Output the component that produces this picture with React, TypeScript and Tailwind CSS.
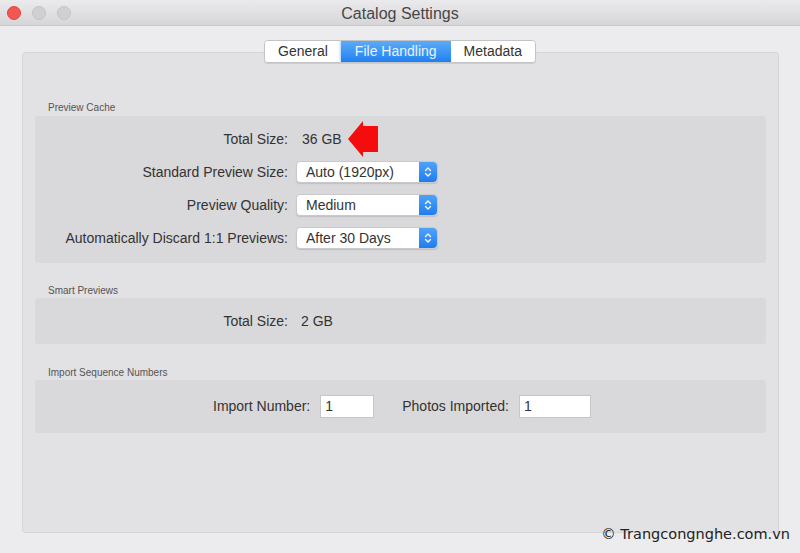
import React from "react";

const font = { fontFamily: '"Liberation Sans", Inter, Arial, sans-serif' };

function Stepper() {
  return (
    <span className="flex h-full w-[18px] items-center justify-center rounded-r-[4px] bg-gradient-to-b from-[#4ea3f8] to-[#1f7cf0]">
      <svg width="8" height="12" viewBox="0 0 8 12" fill="none">
        <path d="M1.5 4.5 L4 2 L6.5 4.5" stroke="white" strokeWidth="1.3" strokeLinecap="round" strokeLinejoin="round" />
        <path d="M1.5 7.5 L4 10 L6.5 7.5" stroke="white" strokeWidth="1.3" strokeLinecap="round" strokeLinejoin="round" />
      </svg>
    </span>
  );
}

function Select({ value }: { value: string }) {
  return (
    <div className="flex h-[22px] w-[142px] items-center justify-between rounded-[4px] border border-[#c9c9cb] bg-white shadow-[0_1px_1px_rgba(0,0,0,0.12)]">
      <span className="pl-[9px] text-[14px] text-[#333]">{value}</span>
      <Stepper />
    </div>
  );
}

function Row({ label, children }: { label: string; children: React.ReactNode }) {
  return (
    <div className="flex h-[22px] items-center">
      <span className="w-[261px] pr-[8px] text-right text-[14px] text-[#333]">{label}</span>
      {children}
    </div>
  );
}

function SectionTitle({ children }: { children: React.ReactNode }) {
  return <div className="pl-[25px] text-[10px] leading-[12px] text-[#555]">{children}</div>;
}

function Tab({ label, active }: { label: string; active?: boolean }) {
  return (
    <div
      className={
        active
          ? "flex h-[21px] items-center bg-gradient-to-b from-[#5aabf8] to-[#1f80f1] px-[14px] text-[14px] text-[#e9f3ff] shadow-[0_0_3px_rgba(30,120,240,0.6)]"
          : "flex h-[21px] items-center bg-white px-[13px] text-[14px] text-[#333]"
      }
    >
      {label}
    </div>
  );
}

export default function App() {
  return (
    <div className="relative h-[553px] w-[800px] overflow-hidden bg-[#ecebed]" style={font}>
      <div className="relative flex h-[26px] items-center justify-center border-b border-[#c9c8ca] bg-gradient-to-b from-[#ebeaec] to-[#d6d5d7] pt-[2px]">
        <div className="absolute left-[7px] top-[6px] flex gap-[11px]">
          <span className="h-[14px] w-[14px] rounded-full border border-[#e0443e] bg-[#f25752]" />
          <span className="h-[14px] w-[14px] rounded-full border border-[#c4c4c6] bg-[#d0cfd1]" />
          <span className="h-[14px] w-[14px] rounded-full border border-[#c4c4c6] bg-[#d0cfd1]" />
        </div>
        <span className="text-[16px] text-[#474747]">Catalog Settings</span>
      </div>

      <div className="pt-[14px]">
        <div className="relative z-10 mb-[-11px] flex justify-center">
          <div className="flex overflow-hidden rounded-[4px] border border-[#c3c3c5] shadow-[0_1px_1px_rgba(0,0,0,0.1)]">
            <Tab label="General" />
            <Tab label="File Handling" active />
            <Tab label="Metadata" />
          </div>
        </div>

        <div className="ml-[22px] h-[481px] w-[757px] rounded-[3px] border border-[#d6d5d7] bg-[#e2e1e3] pt-[49px]">
          <SectionTitle>Preview Cache</SectionTitle>
          <div className="mx-[12px] mt-[2px] flex flex-col gap-[11px] rounded-[3px] bg-[#d9d8da] pb-[14px] pt-[12px]">
            <Row label="Total Size:">
              <span className="pl-[6px] text-[14px] text-[#333]">36 GB</span>
              <svg className="ml-[5px] -my-[8px]" width="32" height="38" viewBox="0 0 32 38">
                <polygon points="1,19 16,1 16,6 31,6 31,32 16,32 16,37" fill="#f50c0c" />
              </svg>
            </Row>
            <Row label="Standard Preview Size:">
              <Select value="Auto (1920px)" />
            </Row>
            <Row label="Preview Quality:">
              <Select value="Medium" />
            </Row>
            <Row label="Automatically Discard 1:1 Previews:">
              <Select value="After 30 Days" />
            </Row>
          </div>

          <div className="mt-[22px]">
            <SectionTitle>Smart Previews</SectionTitle>
          </div>
          <div className="mx-[12px] mt-[1px] flex h-[46px] items-center rounded-[3px] bg-[#d9d8da]">
            <Row label="Total Size:">
              <span className="pl-[5px] text-[14px] text-[#333]">2 GB</span>
            </Row>
          </div>

          <div className="mt-[23px]">
            <SectionTitle>Import Sequence Numbers</SectionTitle>
          </div>
          <div className="mx-[12px] mt-[1px] flex h-[53px] items-center rounded-[3px] bg-[#d9d8da] pl-[178px]">
            <span className="text-[14px] text-[#333]">Import Number:</span>
            <div className="ml-[10px] flex h-[23px] w-[54px] items-center border border-[#c6c6c8] bg-white pl-[4px] text-[14px] text-[#333]">1</div>
            <span className="ml-[28px] text-[14px] text-[#333]">Photos Imported:</span>
            <div className="ml-[10px] flex h-[23px] w-[72px] items-center border border-[#c6c6c8] bg-white pl-[4px] text-[14px] text-[#333]">1</div>
          </div>
        </div>
      </div>

      <div className="absolute bottom-[7px] right-[10px] text-[14.5px] text-[#222]" style={{ fontFamily: '"DejaVu Sans", "Liberation Sans", sans-serif' }}>
        © Trangcongnghe.com.vn
      </div>
    </div>
  );
}
